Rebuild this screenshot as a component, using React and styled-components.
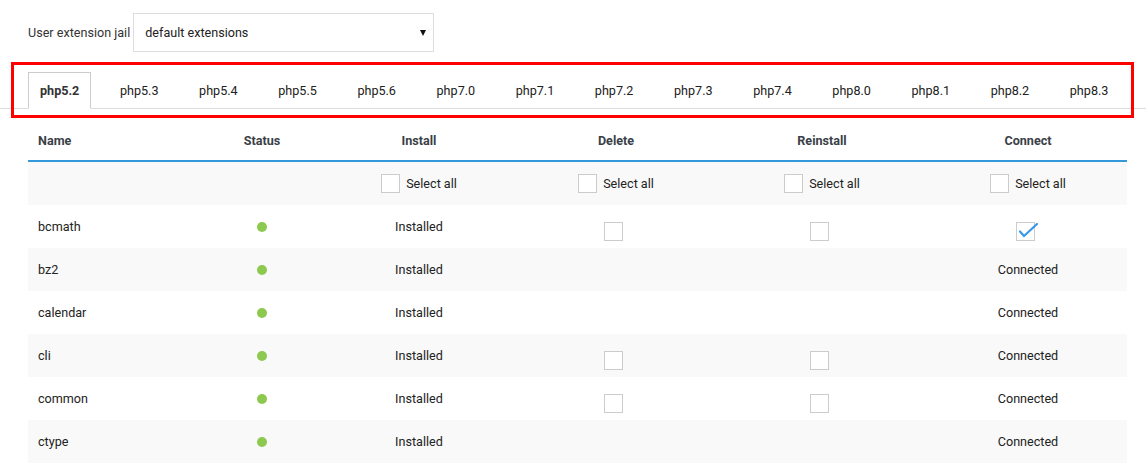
import React from 'react'
import styled, { createGlobalStyle } from 'styled-components';

const GlobalStyle = createGlobalStyle`
    body {
        margin: 0;
        background: #fff;
        font-family: Roboto, 'Liberation Sans', sans-serif;
        font-size: 12.6px;
        color: #333;
    }
`

const versions = ['php5.2', 'php5.3', 'php5.4', 'php5.5', 'php5.6', 'php7.0', 'php7.1',
    'php7.2', 'php7.3', 'php7.4', 'php8.0', 'php8.1', 'php8.2', 'php8.3'];

const extensions = [
    { name: 'bcmath', del: true, reinstall: true, connect: 'checked' },
    { name: 'bz2', connect: 'Connected' },
    { name: 'calendar', connect: 'Connected' },
    { name: 'cli', del: true, reinstall: true, connect: 'Connected' },
    { name: 'common', del: true, reinstall: true, connect: 'Connected' },
    { name: 'ctype', connect: 'Connected' },
];

function Box({ checked, offset }) {
    return (
        <Check $offset={offset}>
            {checked && (
                <svg width="22" height="18" viewBox="0 0 22 18">
                    <path d="M3 9.5 L7 14 L20 2" fill="none" stroke="#3797e8" strokeWidth="2.2" strokeLinecap="round" />
                </svg>
            )}
        </Check>
    );
}

function SelectAll() {
    return (
        <Cell $center>
            <Box />
            <SelectLabel>Select all</SelectLabel>
        </Cell>
    );
}

function App() {
    return (
        <Page>
            <GlobalStyle />
            <Filter>
                <FilterLabel>User extension jail</FilterLabel>
                <Dropdown>
                    <span>default extensions</span>
                    <Arrow />
                </Dropdown>
            </Filter>

            <Tabs>
                {versions.map((v, i) => (
                    <Tab key={v} $active={i === 0}>{v}</Tab>
                ))}
            </Tabs>

            <Table>
                <HeadRow>
                    <Cell>Name</Cell>
                    <Cell $center>Status</Cell>
                    <Cell $center>Install</Cell>
                    <Cell $center>Delete</Cell>
                    <Cell $center>Reinstall</Cell>
                    <Cell $center>Connect</Cell>
                </HeadRow>
                <Row $shade>
                    <Cell />
                    <Cell />
                    <SelectAll />
                    <SelectAll />
                    <SelectAll />
                    <SelectAll />
                </Row>
                {extensions.map((ext, i) => (
                    <Row key={ext.name} $shade={i % 2 === 1}>
                        <Cell>{ext.name}</Cell>
                        <Cell $center><Dot /></Cell>
                        <Cell $center>Installed</Cell>
                        <Cell $center>{ext.del && <Box offset />}</Cell>
                        <Cell $center>{ext.reinstall && <Box offset />}</Cell>
                        <Cell $center>
                            {ext.connect === 'checked' ? <Box checked offset /> : ext.connect}
                        </Cell>
                    </Row>
                ))}
            </Table>

            <Highlight />
        </Page>
    );
}

const Page = styled.div`
    position: relative;
    padding-top: 13px;
    width: 1146px;
`

const Filter = styled.div`
    display: flex;
    align-items: center;
    padding-left: 28px;
`

const FilterLabel = styled.span`
    margin-right: 3px;
`

const Dropdown = styled.div`
    position: relative;
    box-sizing: border-box;
    width: 301px;
    height: 39px;
    display: flex;
    align-items: center;
    padding: 0 11px;
    border: 1px solid #ddd;
    background: #fff;
    color: #222;
`

const Arrow = styled.span`
    position: absolute;
    right: 7px;
    top: 16px;
    width: 0;
    height: 0;
    border-left: 3px solid transparent;
    border-right: 3px solid transparent;
    border-top: 6px solid #111;
`

const Tabs = styled.div`
    display: flex;
    margin-top: 20px;
    padding-left: 28px;
    border-bottom: 1px solid #ddd;
`

const Tab = styled.div`
    box-sizing: border-box;
    height: 37px;
    margin-bottom: -1px;
    margin-right: 16.6px;
    padding: 0 11px;
    display: flex;
    align-items: center;
    border: 1px solid ${p => p.$active ? '#ccc' : 'transparent'};
    border-bottom: ${p => p.$active ? '1px solid #fff' : '1px solid transparent'};
    background: ${p => p.$active ? '#fff' : 'transparent'};
    font-weight: ${p => p.$active ? 700 : 400};
    color: ${p => p.$active ? '#333' : '#222'};
`

const Table = styled.div`
    margin: 12px 19px 0 28px;
`

const columns = '175px 118px 196px 198px 214px 198px';

const HeadRow = styled.div`
    display: grid;
    grid-template-columns: ${columns};
    height: 39px;
    border-bottom: 2px solid #3498db;
    font-weight: 700;
    color: #3a3f47;
`

const Row = styled.div`
    display: grid;
    grid-template-columns: ${columns};
    height: 43px;
    background: ${p => p.$shade ? '#f9f9f9' : '#fff'};
    color: #222;
`

const Cell = styled.div`
    display: flex;
    align-items: center;
    justify-content: ${p => p.$center ? 'center' : 'flex-start'};
    padding: 0 10px;
`

const Check = styled.span`
    position: relative;
    box-sizing: border-box;
    width: 19px;
    height: 19px;
    border: 1px solid #ccc;
    background: #fff;
    margin-top: ${p => p.$offset ? '9px' : '0'};
    margin-right: ${p => p.$offset ? '6px' : '0'};
    svg {
        position: absolute;
        left: 0;
        top: -1px;
    }
`

const SelectLabel = styled.span`
    margin-left: 6px;
`

const Dot = styled.span`
    width: 10px;
    height: 10px;
    border-radius: 50%;
    background: #8dc94e;
`

const Highlight = styled.div`
    position: absolute;
    left: 11px;
    top: 62px;
    width: 1123px;
    height: 56px;
    box-sizing: border-box;
    border: 3px solid #f00;
    pointer-events: none;
`

export default App
